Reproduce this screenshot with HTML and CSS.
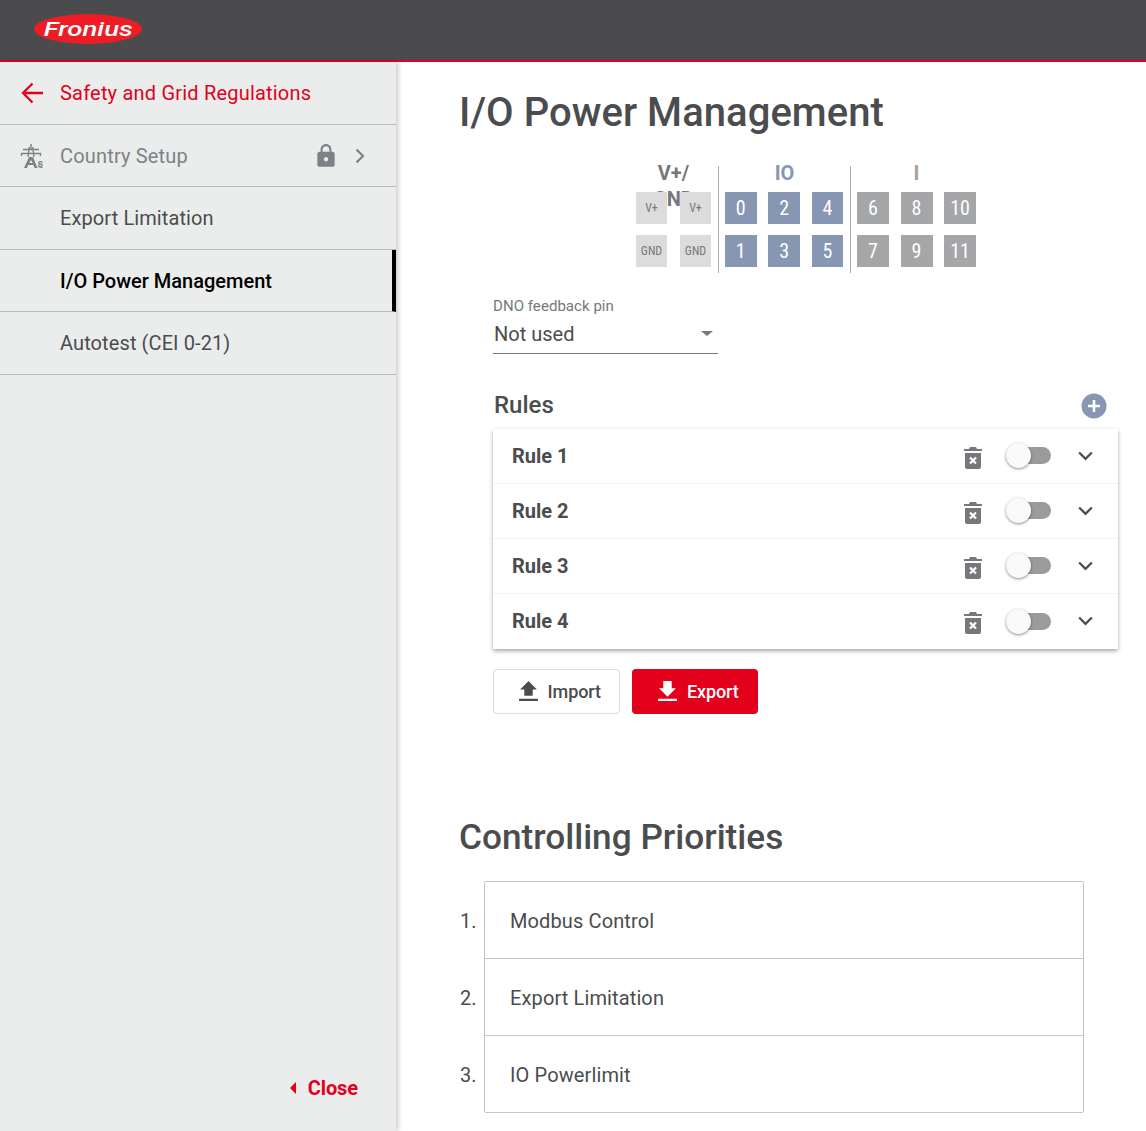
FILE: index.html
```html
<!DOCTYPE html>
<html lang="en">
<head>
<meta charset="utf-8">
<title>I/O Power Management</title>
<link rel="stylesheet" href="styles.css">
</head>
<body>
<header class="topbar">
  <div class="logo"><span class="logo-text">Fronius</span></div>
</header>
<div class="shell">
  <nav class="sidebar">
    <a class="nav-item nav-back">
      <svg class="nav-icon" viewBox="0 0 24 24" width="24" height="24"><path d="M23 12H5M12.500 2.500L3 12l9.500 9.500" fill="none" stroke="#e2001a" stroke-width="2.300"/></svg>
      <span>Safety and Grid Regulations</span>
    </a>
    <a class="nav-item nav-muted">
      <svg class="nav-icon" viewBox="0 0 24 24" width="24" height="24"><g fill="none" stroke="#7d8287" stroke-width="1.400"><path d="M11 0v6M3 5.500h16M1 9.500h20"/><path d="M1.500 9.500V12M20.500 9.500V12"/><path d="M9.300 3L8 13M12.700 3L14 13"/></g><path d="M9 13h4l4.500 11h-3l-1-3h-5.500l-1 3h-3zM11 16l-1.700 3h3.400z" fill="#7d8287" fill-rule="evenodd"/><text x="17.500" y="23.500" class="para">§</text></svg>
      <span>Country Setup</span>
      <svg class="lock" viewBox="0 0 24 24" width="26" height="26"><path fill="#7d8287" d="M18 8h-1V6c0-2.800-2.200-5-5-5S7 3.200 7 6v2H6c-1.100 0-2 .9-2 2v10c0 1.100.9 2 2 2h12c1.100 0 2-.9 2-2V10c0-1.100-.9-2-2-2zm-6 9c-1.100 0-2-.9-2-2s.9-2 2-2 2 .9 2 2-.9 2-2 2zm3.100-9H8.900V6c0-1.700 1.400-3.100 3.100-3.100s3.100 1.400 3.100 3.100v2z"/></svg>
      <svg class="chev-right" viewBox="0 0 12 16" width="12" height="16"><path d="M2.500 1.500L9 8l-6.500 6.500" fill="none" stroke="#7d8287" stroke-width="2.200"/></svg>
    </a>
    <a class="nav-item nav-indent">Export Limitation</a>
    <a class="nav-item nav-indent nav-active">I/O Power Management</a>
    <a class="nav-item nav-indent">Autotest (CEI 0-21)</a>
    <a class="close-link"><span class="close-arrow"></span>Close</a>
  </nav>
  <main class="content">
    <h1 class="page-title">I/O Power Management</h1>

    <section class="pins">
      <div class="pin-group group-power">
        <div class="pin-head">V+/ GND</div>
        <div class="pin-grid">
          <div class="pin pin-light">V+</div><div class="pin pin-light">V+</div>
          <div class="pin pin-light">GND</div><div class="pin pin-light">GND</div>
        </div>
      </div>
      <div class="pin-group group-io">
        <div class="pin-head head-io">IO</div>
        <div class="pin-grid grid-3">
          <div class="pin pin-blue">0</div><div class="pin pin-blue">2</div><div class="pin pin-blue">4</div>
          <div class="pin pin-blue">1</div><div class="pin pin-blue">3</div><div class="pin pin-blue">5</div>
        </div>
      </div>
      <div class="pin-group group-in">
        <div class="pin-head head-in">I</div>
        <div class="pin-grid grid-3">
          <div class="pin pin-gray">6</div><div class="pin pin-gray">8</div><div class="pin pin-gray">10</div>
          <div class="pin pin-gray">7</div><div class="pin pin-gray">9</div><div class="pin pin-gray">11</div>
        </div>
      </div>
    </section>

    <section class="rules-area">
      <div class="select-field">
        <label class="select-label">DNO feedback pin</label>
        <div class="select-value"><span>Not used</span><span class="select-caret"></span></div>
      </div>

      <div class="rules-head">
        <h2 class="rules-title">Rules</h2>
        <svg class="add" viewBox="0 0 26 26" width="26" height="26"><circle cx="13" cy="13" r="12.500" fill="#8796b3"/><path d="M13 7v12M7 13h12" stroke="#fff" stroke-width="2.600"/></svg>
      </div>

      <div class="rule-list">
        <div class="rule"><span class="rule-name">Rule 1</span>
          <svg class="trash" viewBox="0 0 18 22" width="18" height="22"><path fill="#76787b" d="M6 0h6l1 2h5v2H0V2h5zM1 6h16v14a2 2 0 0 1-2 2H3a2 2 0 0 1-2-2z"/><path d="M6 10.500l6 6M12 10.500l-6 6" stroke="#fff" stroke-width="2.200"/></svg>
          <span class="toggle"><span class="knob"></span></span>
          <svg class="chev" viewBox="0 0 16 10" width="15" height="10"><path d="M1.200 1.200L8 8l6.800-6.800" fill="none" stroke="#4b4c4e" stroke-width="2.400"/></svg>
        </div>
        <div class="rule"><span class="rule-name">Rule 2</span>
          <svg class="trash" viewBox="0 0 18 22" width="18" height="22"><path fill="#76787b" d="M6 0h6l1 2h5v2H0V2h5zM1 6h16v14a2 2 0 0 1-2 2H3a2 2 0 0 1-2-2z"/><path d="M6 10.500l6 6M12 10.500l-6 6" stroke="#fff" stroke-width="2.200"/></svg>
          <span class="toggle"><span class="knob"></span></span>
          <svg class="chev" viewBox="0 0 16 10" width="15" height="10"><path d="M1.200 1.200L8 8l6.800-6.800" fill="none" stroke="#4b4c4e" stroke-width="2.400"/></svg>
        </div>
        <div class="rule"><span class="rule-name">Rule 3</span>
          <svg class="trash" viewBox="0 0 18 22" width="18" height="22"><path fill="#76787b" d="M6 0h6l1 2h5v2H0V2h5zM1 6h16v14a2 2 0 0 1-2 2H3a2 2 0 0 1-2-2z"/><path d="M6 10.500l6 6M12 10.500l-6 6" stroke="#fff" stroke-width="2.200"/></svg>
          <span class="toggle"><span class="knob"></span></span>
          <svg class="chev" viewBox="0 0 16 10" width="15" height="10"><path d="M1.200 1.200L8 8l6.800-6.800" fill="none" stroke="#4b4c4e" stroke-width="2.400"/></svg>
        </div>
        <div class="rule"><span class="rule-name">Rule 4</span>
          <svg class="trash" viewBox="0 0 18 22" width="18" height="22"><path fill="#76787b" d="M6 0h6l1 2h5v2H0V2h5zM1 6h16v14a2 2 0 0 1-2 2H3a2 2 0 0 1-2-2z"/><path d="M6 10.500l6 6M12 10.500l-6 6" stroke="#fff" stroke-width="2.200"/></svg>
          <span class="toggle"><span class="knob"></span></span>
          <svg class="chev" viewBox="0 0 16 10" width="15" height="10"><path d="M1.200 1.200L8 8l6.800-6.800" fill="none" stroke="#4b4c4e" stroke-width="2.400"/></svg>
        </div>
      </div>

      <div class="actions">
        <button class="btn btn-import">
          <svg viewBox="0 0 18 20" width="19" height="21"><path fill="#4b4c4e" d="M9 0l8 8h-4v6H5V8H1zM0 17h18v2H0z"/></svg>
          Import
        </button>
        <button class="btn btn-export">
          <svg viewBox="0 0 18 20" width="19" height="21"><path fill="#fff" d="M5 0h8v7h4l-8 8-8-8h4zM0 17h18v2H0z"/></svg>
          Export
        </button>
      </div>
    </section>

    <h1 class="page-title title-second">Controlling Priorities</h1>

    <section class="priorities">
      <ol class="nums"><li>1.</li><li>2.</li><li>3.</li></ol>
      <ul class="prio-list">
        <li>Modbus Control</li>
        <li>Export Limitation</li>
        <li>IO Powerlimit</li>
      </ul>
    </section>
  </main>
</div>
</body>
</html>
```
FILE: styles.css
```css
* { box-sizing: border-box; }
html, body { margin: 0; height: 100%; }
body {
  height: 1131px;
  overflow: hidden;
  font-family: Roboto, "Liberation Sans", sans-serif;
  color: #4b4c4e;
  background: #fff;
  display: flex;
  flex-direction: column;
}

.topbar {
  height: 62px;
  flex: none;
  background: #4b4b4d;
  border-bottom: 2px solid #e2001a;
  display: flex;
  align-items: center;
  padding-left: 34px;
}
.logo {
  width: 108px;
  height: 30px;
  margin-bottom: 3px;
  border-radius: 50%;
  background: #ee1c25;
  display: flex;
  align-items: center;
  justify-content: center;
}
.logo-text {
  color: #fff;
  font-family: Roboto, sans-serif;
  font-weight: 500;
  font-style: italic;
  font-size: 20px;
  line-height: 1;
  transform: scaleX(1.38);
}

.shell { flex: 1; display: flex; min-height: 0; }

.sidebar {
  width: 396px;
  flex: none;
  background: #ebeded;
  box-shadow: 2px 0 5px rgba(0, 0, 0, 0.22);
  display: flex;
  flex-direction: column;
  position: relative;
}
.nav-item {
  height: 62.5px;
  flex: none;
  border-bottom: 1px solid #b9bbbb;
  display: flex;
  align-items: center;
  font-size: 20px;
  letter-spacing: 0.1px;
  color: #4b4c4e;
  padding: 1px 0 0 20px;
}
.nav-back { padding-top: 0; color: #e2001a; letter-spacing: 0.2px; }
.nav-icon { margin-right: 16px; flex: none; }
.nav-muted { color: #7d8287; letter-spacing: 0.17px; }
.nav-indent { padding-left: 60px; }
.nav-active {
  color: #000;
  font-weight: 500;
  letter-spacing: 0;
  border-right: 4px solid #000;
}
.para { font-size: 9px; fill: #7d8287; font-family: Roboto, sans-serif; font-weight: 700; letter-spacing: 0; }
.lock { margin-left: auto; }
.chev-right { margin: 0 30px 0 15px; }

.close-link {
  margin: auto 38px 31px auto;
  display: flex;
  align-items: center;
  color: #e2001a;
  font-size: 20px;
  font-weight: 700;
  letter-spacing: -0.1px;
}
.close-arrow {
  width: 0;
  height: 0;
  margin-right: 12px;
  border-style: solid;
  border-width: 6px 6px 6px 0;
  border-color: transparent #e2001a transparent transparent;
}

.content { flex: 1; min-width: 0; padding: 23px 28px 0 64px; }
.page-title {
  margin: 0 0 0 -1px;
  font-size: 40px;
  letter-spacing: 0.05px;
  line-height: 56px;
  font-weight: 500;
  color: #4b4c4e;
}

.pins {
  display: flex;
  margin-top: 25px;
  padding-left: 176px;
  height: 107px;
}
.pin-group { border-left: 1px solid #aaa; padding: 0 6px; }
.group-power { border-left: 0; width: 82px; padding: 0 7px 0 0; }
.group-io { width: 132px; }
.group-in { width: 132px; }
.pin-head {
  text-align: center;
  font-size: 20px;
  font-weight: 700;
  line-height: 26px;
  height: 32px;
  margin-top: -6px;
  color: #76787b;
}
.group-power .pin-head { padding: 0 15px; }
.head-io { color: #8796b3; }
.head-in { color: #a7a095; }
.pin-grid {
  display: grid;
  grid-template-columns: 31px 31px;
  column-gap: 13px;
  row-gap: 11.9px;
  grid-auto-rows: 31.5px;
  position: relative;
}
.grid-3 { grid-template-columns: repeat(3, 31.5px); column-gap: 11.9px; }
.group-in .grid-3 { grid-template-columns: repeat(3, 32px); column-gap: 11.5px; }
.pin {
  display: flex;
  align-items: center;
  justify-content: center;
  font-size: 20px;
  font-stretch: 75%;
  color: #fff;
}
.pin-light { background: #dcdcdc; color: #76787b; font-size: 12px; }
.pin-blue { background: #8796b3; }
.pin-gray { background: #a5a6a8; }

.rules-area { padding-left: 33px; }
.select-field { width: 225px; margin-top: 24px; }
.select-label {
  display: block;
  font-size: 15px;
  letter-spacing: 0.05px;
  line-height: 18px;
  color: #76787b;
}
.select-value {
  height: 39px;
  border-bottom: 1px solid #76787b;
  display: flex;
  align-items: center;
  justify-content: space-between;
  padding: 0 5px 1px 1px;
  font-size: 20px;
  color: #4b4c4e;
}
.select-caret {
  width: 0;
  height: 0;
  border-style: solid;
  border-width: 5px 6px 0;
  border-color: #76787b transparent transparent;
}

.rules-head {
  margin-top: 32px;
  height: 43px;
  display: flex;
  align-items: flex-start;
  justify-content: space-between;
  padding: 2px 11px 0 1px;
}
.rules-title {
  margin: 0;
  font-size: 24px;
  line-height: 34px;
  font-weight: 500;
  color: #4b4c4e;
}
.add { margin-top: 5px; }

.rule-list {
  width: 625px;
  background: #fff;
  box-shadow: 0 2px 4px rgba(0, 0, 0, 0.35);
}
.rule {
  height: 54.9px;
  display: flex;
  align-items: center;
  padding: 0 25px 0 19px;
  border-bottom: 1px solid #f3f3f3;
}
.rule:last-child { border-bottom: 0; height: 55.3px; }
.rule-name { font-size: 20px; font-weight: 700; color: #4b4c4e; margin-right: auto; }
.trash { margin-top: 4px; }
.toggle {
  width: 45px;
  height: 17px;
  margin-left: 24px;
  border-radius: 9px;
  background: #9b9b9b;
  position: relative;
  display: block;
}
.knob {
  position: absolute;
  left: 0;
  top: -4px;
  width: 25px;
  height: 25px;
  border-radius: 50%;
  background: #fafafa;
  box-shadow: 0 1px 3px rgba(0, 0, 0, 0.45);
}
.chev { margin-left: 27px; }

.actions { display: flex; gap: 12px; margin-top: 20px; }
.btn {
  height: 45px;
  width: 127px;
  border-radius: 4px;
  display: flex;
  align-items: center;
  justify-content: center;
  gap: 9.5px;
  padding: 0 0 0 7px;
  font-family: inherit;
  font-size: 18px;
  letter-spacing: -0.1px;
  font-weight: 500;
}
.btn-import { background: #fff; color: #4b4c4e; border: 1px solid #dcdcdc; }
.btn-export { background: #e2001a; color: #fff; border: 0; width: 126px; }

.title-second { margin-top: 95px; font-size: 35.2px; letter-spacing: 0; }

.priorities { display: flex; margin-top: 16px; }
.nums {
  list-style: none;
  margin: 0;
  padding: 0;
  width: 24px;
  flex: none;
}
.nums li {
  height: 77px;
  display: flex;
  align-items: center;
  padding-top: 4px;
  font-size: 20px;
  color: #4b4c4e;
}
.prio-list {
  list-style: none;
  margin: 0;
  padding: 0;
  width: 600px;
  border: 1px solid #c4c4c4;
  border-radius: 2px;
}
.prio-list li {
  height: 77px;
  display: flex;
  align-items: center;
  padding: 2px 0 0 25px;
  font-size: 20px;
  letter-spacing: 0.12px;
  border-bottom: 1px solid #c4c4c4;
}
.prio-list li:last-child { border-bottom: 0; height: 76px; }
```
